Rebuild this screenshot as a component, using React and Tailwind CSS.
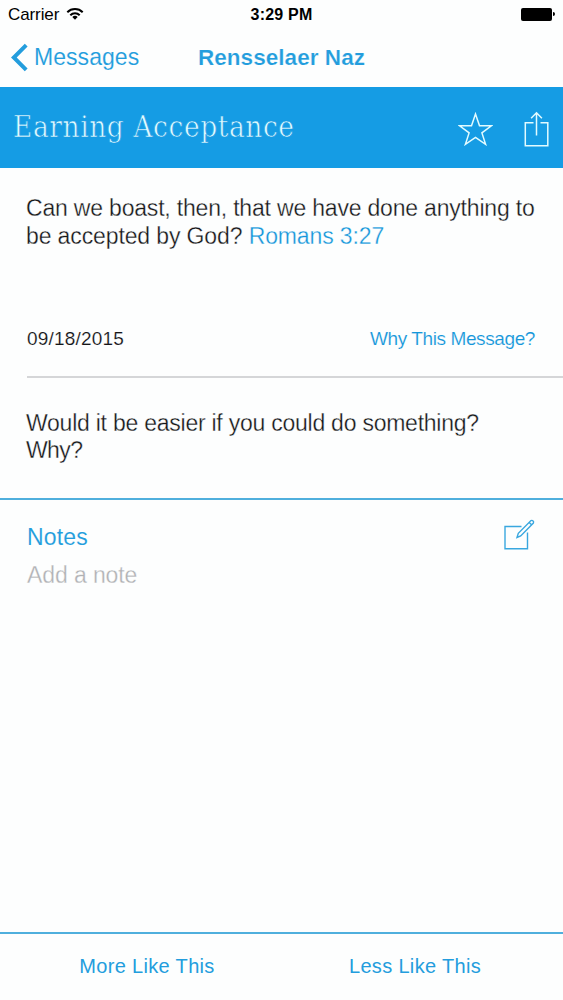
import React from "react";

function StatusBar() {
  return (
    <div className="grid h-7 grid-cols-3 items-center pl-2 pr-2 text-black">
      <div className="flex items-center gap-[7px] pt-px text-[17px] leading-7 tracking-[-0.1px]">
        <span>Carrier</span>
        <svg className="-mt-0.5" width="18" height="14" viewBox="0 0 18 14" fill="none" stroke="currentColor" strokeWidth="2">
          <path d="M1.3 5.2a10.9 10.9 0 0 1 15.4 0M4.3 8.2a6.7 6.7 0 0 1 9.4 0" />
          <path d="M9 12.8 6.3 10.1a3.8 3.8 0 0 1 5.4 0z" fill="currentColor" stroke="none" />
        </svg>
      </div>
      <div className="pt-px text-center text-base font-bold leading-7 tracking-[0.2px]">3:29 PM</div>
      <div className="-mt-px flex items-center justify-end gap-px">
        <span className="h-[13px] w-[31px] rounded-[2px] bg-black" />
        <span className="h-1 w-[2px] rounded-r-full bg-black" />
      </div>
    </div>
  );
}

function NavBar() {
  return (
    <div className="relative flex h-[59px] items-center justify-center text-[#239ddd]">
      <button className="absolute left-[11px] top-0 flex h-[59px] items-center gap-[6px] text-[23px]">
        <svg width="17" height="29" viewBox="0 0 17 29" fill="none" stroke="currentColor" strokeWidth="4">
          <path d="M15.2 2.2 2.8 14.5l12.4 12.3" />
        </svg>
        <span className="tracking-[0.05px] [-webkit-text-stroke:0.1px_#fdfefe]">Messages</span>
      </button>
      <h1 className="text-[22.5px] font-bold tracking-[0.05px] [-webkit-text-stroke:0.2px_#fdfefe]">Rensselaer Naz</h1>
    </div>
  );
}

function TitleBar() {
  return (
    <div className="flex h-[81px] items-center justify-between bg-[#159ce4] pl-[13px] pr-[13px] text-[#e2fbff]">
      <h2 className="-mt-px whitespace-nowrap font-['DejaVu_Serif_Condensed','DejaVu_Serif',serif] text-[29.5px] leading-10 tracking-[0.55px] [-webkit-text-stroke:0.65px_#159ce4]">Earning Acceptance</h2>
      <div className="flex items-center gap-[31px] pt-0.5">
        <svg width="35" height="34" viewBox="0 0 35 34" fill="none" stroke="currentColor" strokeWidth="1.5">
          <path d="m17.5 2 4 11.8h11.9l-9.5 7.1 3.7 11.4-10.1-7-10.1 7 3.7-11.4-9.5-7.1h11.9z" />
        </svg>
        <svg width="26" height="36" viewBox="0 0 26 36" fill="none" stroke="currentColor" strokeWidth="1.5">
          <path d="M9.5 11.7H1.3v23h22.5v-23h-7.3M12.5 24.5V2M7.1 7.2l5.4-5.4 5.4 5.4" />
        </svg>
      </div>
    </div>
  );
}

export default function App() {
  return (
    <div className="flex h-[1000px] w-[563px] flex-col overflow-hidden bg-[#fdfefe] font-['Liberation_Sans',Arial,sans-serif] text-[#151618]">
      <StatusBar />
      <NavBar />
      <TitleBar />
      <section className="h-[208px] pl-[26px] pr-7 pt-[26px] [-webkit-text-stroke:0.3px_#fdfefe]">
        <p className="whitespace-nowrap text-[23px] leading-7">
          <span className="block tracking-[-0.19px]">Can we boast, then, that we have done anything to</span>
          <span className="block tracking-[-0.12px]">be accepted by God? <a className="text-[#1496da]">Romans 3:27</a></span>
        </p>
        <div className="mt-[77px] flex justify-between pl-px text-[19px] leading-6 [-webkit-text-stroke:0.15px_#fdfefe]">
          <span className="tracking-[0.2px]">09/18/2015</span>
          <a className="tracking-[-0.4px] text-[#1496da]">Why This Message?</a>
        </div>
      </section>
      <section className="ml-[27px] h-[122px] border-t-2 border-[#d5d6d8] pt-8 [-webkit-text-stroke:0.3px_#fdfefe]">
        <p className="-ml-px text-[23px] leading-[27px]">
          <span className="block tracking-[-0.24px]">Would it be easier if you could do something?</span>
          <span className="block tracking-[-0.6px]">Why?</span>
        </p>
      </section>
      <section className="flex flex-1 justify-between border-t-2 border-[#4fafdd] pl-[27px] pr-7 pt-[21px]">
        <div>
          <h3 className="text-[23px] leading-8 tracking-[0.15px] text-[#239ddd] [-webkit-text-stroke:0.1px_#fdfefe]">Notes</h3>
          <p className="mt-1.5 text-[23px] leading-8 tracking-[-0.1px] text-[#b0b1b4] [-webkit-text-stroke:0.3px_#fdfefe]">Add a note</p>
        </div>
        <svg className="-mt-[2px] text-[#39a7df]" width="32" height="32" viewBox="0 0 32 32" fill="none" stroke="currentColor" strokeWidth="1.4">
          <path d="M18.5 7.5H2v22.3h22.5V13.5" />
          <path d="m14 18.5 1.3-4.2L28 1.6c1.5-.8 3.2.9 2.4 2.4L17.7 16.9zM26.2 3.5l2.6 2.6" />
        </svg>
      </section>
      <footer className="flex h-[68px] items-center border-t-2 border-[#4fafdd] pb-0.5 pl-[13px] pr-[14px] text-[20px] tracking-[0.33px] text-[#239ddd]">
        <button className="flex-1">More Like This</button>
        <button className="flex-1">Less Like This</button>
      </footer>
    </div>
  );
}
